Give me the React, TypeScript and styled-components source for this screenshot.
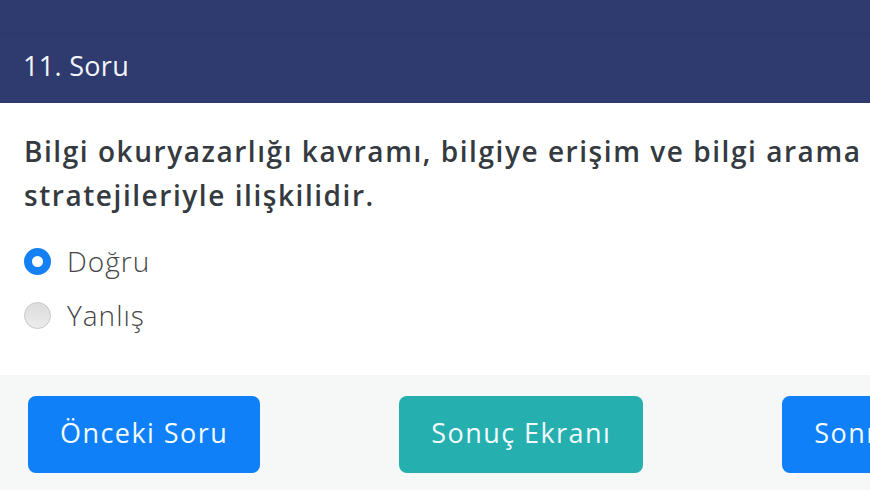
import styled, { createGlobalStyle } from 'styled-components';

const GlobalStyle = createGlobalStyle`
    html, body {
        margin: 0;
        padding: 0;
        overflow: hidden;
        background: #ffffff;
    }
    body {
        font-family: "Open Sans", "Noto Sans", sans-serif;
    }
`;

type Option = {
    label: string,
    checked: boolean
}

const options: Option[] = [
    { label: 'Doğru', checked: true },
    { label: 'Yanlış', checked: false },
];

const App = () => {
    return (
        <>
            <GlobalStyle />
            <Page>
                <TitleBar />
                <Header>11. Soru</Header>

                <Body>
                    <Question>
                        Bilgi okuryazarlığı kavramı, bilgiye erişim ve bilgi arama stratejileriyle ilişkilidir.
                    </Question>

                    <Options>
                        { options.map(option =>
                            <OptionRow key={option.label}>
                                <Radio $checked={option.checked} />
                                <OptionLabel>{option.label}</OptionLabel>
                            </OptionRow>
                        )}
                    </Options>
                </Body>

                <Footer>
                    <Button $variant='primary'>Önceki Soru</Button>
                    <Button $variant='teal'>Sonuç Ekranı</Button>
                    <Button $variant='primary'>Sonraki Soru</Button>
                </Footer>
            </Page>
        </>
    )
}

const Page = styled.div`
    width: 1052px;
    height: 490px;
    display: flex;
    flex-direction: column;
`;

const TitleBar = styled.div`
    height: 33px;
    background-color: #2f3b6f;
    border-bottom: 1px solid #2b366a;
`;

const Header = styled.div`
    height: 69px;
    padding: 0 0 6px 23px;
    box-sizing: border-box;
    background-color: #2f3b6f;
    color: #f4f5fa;
    font-size: 27px;
    letter-spacing: 0.3px;
    display: flex;
    align-items: center;
`;

const Body = styled.div`
    box-sizing: border-box;
    padding: 26px 24px 0;
    height: 272px;
`;

const Question = styled.div`
    max-width: 870px;
    font-size: 28px;
    font-weight: 600;
    letter-spacing: 1.55px;
    line-height: 44px;
    color: #343a40;
    margin-bottom: 25px;
`;

const Options = styled.div`
    display: flex;
    flex-direction: column;
    gap: 16px;
`;

const OptionRow = styled.label`
    display: flex;
    align-items: center;
    gap: 16px;
    height: 38px;
`;

const Radio = styled.span<{ $checked: boolean }>`
    width: 27px;
    height: 27px;
    border-radius: 50%;
    box-sizing: border-box;
    flex-shrink: 0;
    ${props => props.$checked
        ? `
            background: #ffffff;
            border: 8px solid #1580f4;
        `
        : `
            background: linear-gradient(#dcdcdc, #ececec);
            border: 1px solid #c6c6c6;
        `
    }
`;

const OptionLabel = styled.span`
    font-size: 28px;
    font-weight: 300;
    letter-spacing: 1px;
    color: #454545;
`;

const Footer = styled.div`
    flex: 1;
    background-color: #f6f7f7;
    padding: 21px 28px 0;
    display: flex;
    justify-content: space-between;
    align-items: flex-start;
`;

const Button = styled.button<{ $variant: 'primary' | 'teal' }>`
    height: 77px;
    padding: 0 32px 4px;
    border: none;
    border-radius: 8px;
    font-family: "Open Sans", "Noto Sans", sans-serif;
    font-size: 27px;
    letter-spacing: 1.45px;
    color: #f2fbff;
    background-color: ${props => props.$variant === 'teal' ? '#25afae' : '#0f80f7'};
    cursor: pointer;
`;

export default App;
